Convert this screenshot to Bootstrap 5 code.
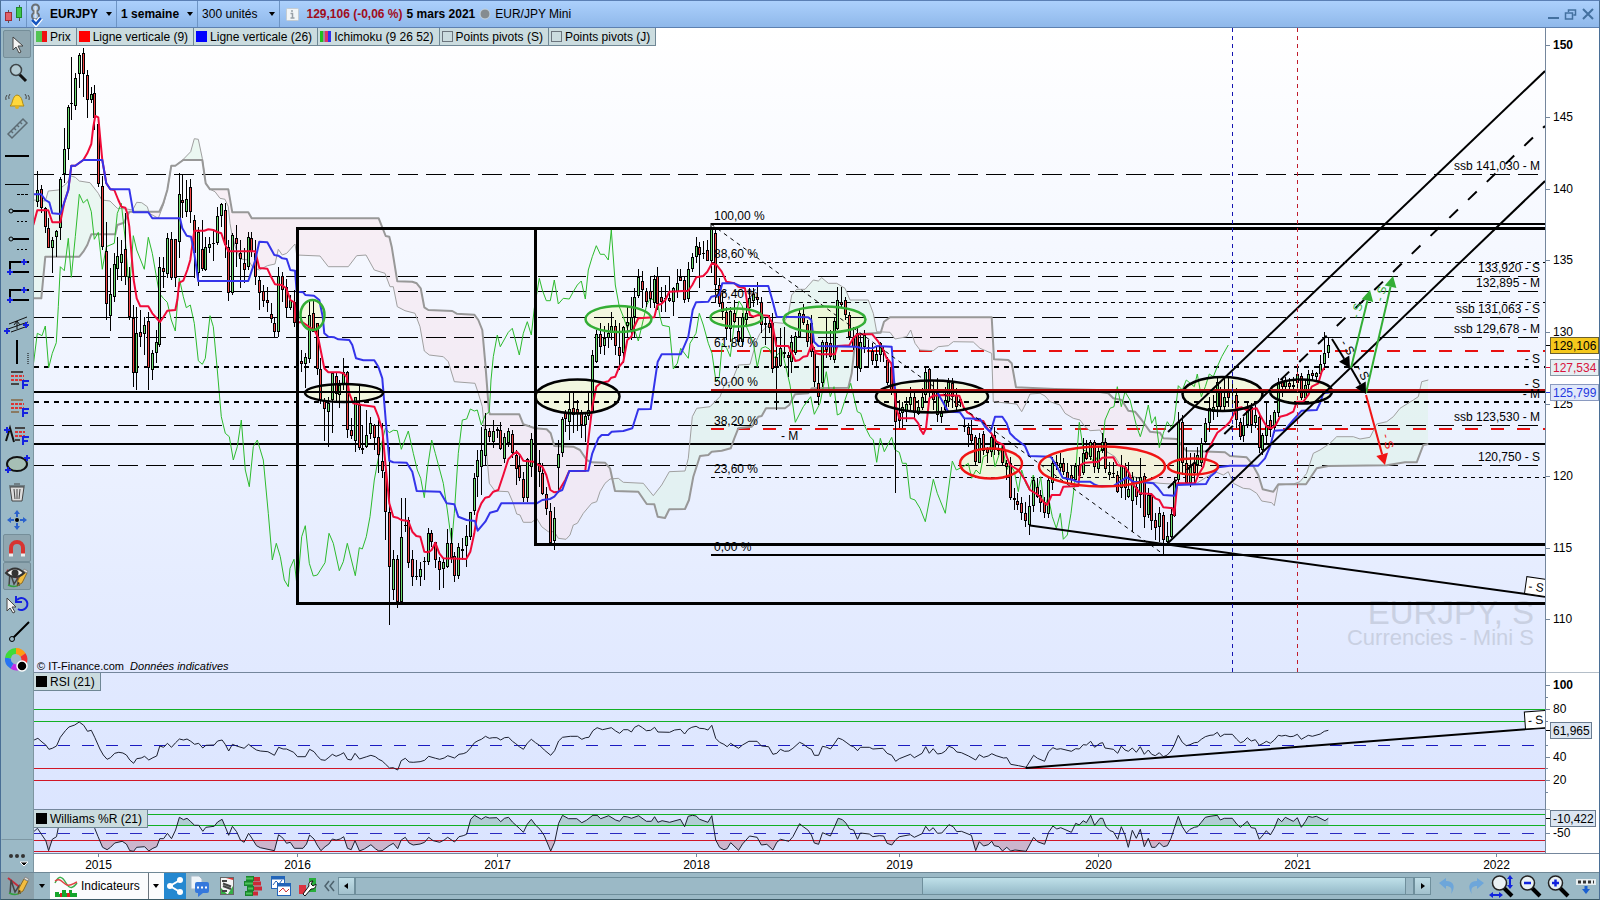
<!DOCTYPE html>
<html lang="fr">
<head>
<meta charset="utf-8">
<meta name="viewport" content="width=device-width, initial-scale=1">
<title>EURJPY - 1 semaine</title>
<link href="https://cdn.jsdelivr.net/npm/bootstrap@5.3.0/dist/css/bootstrap.min.css" rel="stylesheet">
<style>
body{font-family:"Liberation Sans",Arial,sans-serif;font-size:12px;line-height:16px;color:#000;background:#9bb9c6}
button{font:inherit;color:#000;background:none;border:0;padding:0}
.frame{height:100vh;border:1px solid #4a6f96;border-top-color:#5b7fb4;border-bottom-color:#3c5a66}
.titlebar{height:27px;background:linear-gradient(#acd0fc,#8fb8ea);border-bottom:1px solid #5d80b0}
.titlebar .cell{height:26px;border-right:1px solid #6d94c4}
.caret{width:0;height:0;border:3px solid transparent;border-top:4px solid #000;border-bottom:0}
.price{color:#a00d1c}
.tools{width:33px;padding-top:2px;background:#9bb9c6;border-right:1px solid #7d95a0}
.tools button{height:28px;width:28px;margin-left:2px;border:1px solid transparent}
.tools button.on{background:#8fa6b0;border-color:#758e99;border-radius:2px}
.tools .more{height:33px;width:32px;margin:0;border-top:1px solid #7d97a3}
.tools svg,.bottombar svg,.titlebar svg{display:block}
.plot{background:linear-gradient(#fff,#eef3ff 45%,#e1e9ff 78%,#dae4ff)}
.plot svg,.scale svg,.years svg{position:absolute;left:0;top:0;width:100%;height:100%}
.scale{width:54px;background:#fff;border-left:1px solid #74869c}
.years{height:19px;background:#fff;border-top:1px solid #74869c}
.tag{height:18px;line-height:18px;background:#cbdcdf;border:1px solid #6f8795;border-top:0;border-left:0;padding:0 5px 0 2px;white-space:nowrap}
.tags{position:absolute;left:0;z-index:2}
.sw{width:11px;height:11px;display:inline-block;margin-right:3px;vertical-align:-1px}
.bottombar{height:27px;background:#9bb9c6;border-top:1px solid #6f8896}
.bottombar button{height:26px}
.white{background:#fbfcfd}
.track{height:18px;border:1px solid #6f8f9c;background:#9bb9c6}
.thumb{background:linear-gradient(#bfe0e9,#95b9c8);border:1px solid #6f8f9c;border-width:0 1px}
.arrowbtn{width:17px;height:18px!important;background:linear-gradient(#bfdde6,#a2c1cd);border:1px solid #6f8f9c}
.note{position:absolute;left:3px;z-index:2;font-size:11px}
text{font-family:"Liberation Sans",Arial,sans-serif;font-size:12px}
</style>
</head>
<body>
<div class="frame d-flex flex-column overflow-hidden">
  <header class="titlebar d-flex align-items-center flex-shrink-0">
    <div class="cell d-flex align-items-center justify-content-center" style="width:26px">
      <svg width="22" height="22"><path d="M5.500 7v13M16.500 2v16" stroke="#555"/><rect x="2.500" y="9.500" width="6" height="8" fill="#e2606a" stroke="#a02d38"/><rect x="13.500" y="4.500" width="5" height="10" fill="#3fc54a" stroke="#1f8a2c"/></svg>
    </div>
    <div class="cell d-flex align-items-center pe-1">
      <svg width="23" height="25"><g fill="none" stroke="#6a7075" stroke-width="2"><circle cx="8.500" cy="6" r="3.500"/><circle cx="8.500" cy="14" r="3.500"/></g><path d="M8.500 4v12" stroke="#dde3e6" stroke-width="2"/><path d="M6 18l3 4 5-6" fill="none" stroke="#fff" stroke-width="5"/><path d="M5 18l4 4 5-6" fill="none" stroke="#1554c0" stroke-width="2.500"/></svg>
      <button class="d-flex align-items-center fw-bold gap-2">EURJPY <span class="caret"></span></button>
    </div>
    <button class="cell d-flex align-items-center fw-bold gap-2 ps-1 pe-1">1 semaine <span class="caret"></span></button>
    <button class="cell d-flex align-items-center gap-2 ps-1 pe-1">300 unités <span class="caret ms-1"></span></button>
    <svg width="26" height="24"><rect x="6.500" y="6.500" width="12" height="12" rx="1" fill="#f2f5f7" stroke="#c4ccd2"/><path d="M11 9h2M10.500 11.500h2v4M10.500 16h4" stroke="#98a0a6" stroke-width="1.500" fill="none"/></svg>
    <span class="price fw-bold">129,106 (-0,06 %)</span>
    <span class="fw-bold ms-1">5 mars 2021</span>
    <svg width="20" height="20"><circle cx="10" cy="10" r="5" fill="#858c90" stroke="#c5d3dd"/></svg>
    <span>EUR/JPY Mini</span>
    <div class="ms-auto d-flex pe-1 gap-1">
      <button aria-label="Réduire"><svg width="13" height="14" stroke="#43709f" stroke-width="2" fill="none"><path d="M1 11h11"/></svg></button>
      <button aria-label="Restaurer"><svg width="13" height="14" stroke="#43709f" stroke-width="1.500" fill="none"><path d="M4.500 5V3h7v5h-2M1.500 6h7v6h-7z"/></svg></button>
      <button aria-label="Fermer"><svg width="14" height="14" stroke="#43709f" stroke-width="2" fill="none"><path d="M2 2l10 10M12 2L2 12"/></svg></button>
    </div>
  </header>

  <div class="d-flex flex-grow-1 overflow-hidden">
    <nav class="tools d-flex flex-column flex-shrink-0 overflow-hidden" id="tools" aria-label="Outils"></nav>
    <main class="d-flex flex-column flex-grow-1">
      <div class="d-flex flex-grow-1">
        <section class="plot position-relative flex-grow-1 overflow-hidden" id="plot">
          <svg id="chart" role="img" aria-label="Graphique EURJPY"></svg>
          <div class="tags d-flex" style="top:0">
            <span class="tag"><i class="sw" style="background:linear-gradient(90deg,#52c452 50%,#f01010 50%)"></i>Prix</span>
            <span class="tag"><i class="sw" style="background:#f00"></i>Ligne verticale (9)</span>
            <span class="tag"><i class="sw" style="background:#00f"></i>Ligne verticale (26)</span>
            <span class="tag"><i class="sw" style="background:linear-gradient(90deg,#1fc01f 30%,#9a8f9a 30% 45%,#e0306c 45% 70%,#3030f0 70%)"></i>Ichimoku (9 26 52)</span>
            <span class="tag"><i class="sw border border-secondary"></i>Points pivots (S)</span>
            <span class="tag"><i class="sw border border-secondary"></i>Points pivots (J)</span>
          </div>
          <div class="note" id="copy">© IT-Finance.com&nbsp; <em>Données indicatives</em></div>
          <div class="tags" id="rsiTag"><span class="tag d-block"><i class="sw bg-black"></i>RSI (21)</span></div>
          <div class="tags" id="wilTag"><span class="tag d-block"><i class="sw bg-black"></i>Williams %R (21)</span></div>
        </section>
        <aside class="scale position-relative flex-shrink-0"><svg id="scale"></svg></aside>
      </div>
      <div class="years position-relative flex-shrink-0"><svg id="years"></svg></div>
    </main>
  </div>

  <footer class="bottombar d-flex align-items-center flex-shrink-0">
    <button style="width:33px;background:#8ba1ab" aria-label="Dessin"><svg width="33" height="26"><use href="#pencil"/></svg></button>
    <button style="width:16px" aria-label="Plus d'outils"><span class="caret d-block mx-auto"></span></button>
    <button class="white d-flex align-items-center ps-1 pe-2"><svg width="27" height="24" fill="none"><path d="M1 9c4-8 7-7 11 0s7 5 11 0" stroke="#3cae4c" stroke-width="1.500"/><path d="M1 7c6-4 8 3 12 4s7-2 10-3" stroke="#e04444" stroke-width="1.500"/><path d="M1 23v-5h4v2h3v-4h4v3h3v-3h3v3h5v4z" fill="#16a52c"/><path d="M6 23v-4h2v4M13 23v-4h3v4" fill="#d22"/></svg>Indicateurs</button>
    <button class="white border-start border-secondary" style="width:16px" aria-label="Choisir un indicateur"><span class="caret d-block mx-auto"></span></button>
    <button style="width:22px;background:#2488d0" aria-label="Partager"><svg width="22" height="24"><path d="M16 6L6 12l10 6" fill="none" stroke="#fff" stroke-width="2"/><g fill="#fff"><circle cx="16" cy="6" r="3"/><circle cx="6" cy="12" r="3"/><circle cx="16" cy="18" r="3"/></g></svg></button>
    <button aria-label="Discussion"><svg width="28" height="24"><path d="M5 2h8l3 3v10H5z" fill="#eef4f8" stroke="#a8bac8"/><rect x="9" y="8" width="14" height="11" rx="2" fill="#3578dc"/><path d="M12 18v5l5-4" fill="#3578dc"/><path d="M11 13.500h2m2 0h2m2 0h2" stroke="#fff" stroke-width="2"/></svg></button>
    <button aria-label="Ordres"><svg width="27" height="24"><rect x="6.500" y="3.500" width="13" height="17" fill="#f4f4f4" stroke="#666"/><path d="M12 4h7v2z" fill="#e03535"/><path d="M7 20v-6l6 6zM19 20v-8l-5 8z" fill="#35ad44"/><path d="M8 7h5M9 9.500l8 3M9 12l8 3M8 17h5" stroke="#444" stroke-width="2"/></svg></button>
    <button aria-label="Carnet"><svg width="27" height="24"><path d="M5 4.500h8M3 9.500h9M6 14.500h7M4 19.500h8" stroke="#18852b" stroke-width="5"/><path d="M13 5h6M12 9.500h8M13 14.500h8M12 19.500h5" stroke="#cc2a36" stroke-width="4"/><path d="M5 4.500h7M4 9.500h8M7 14.500h5M5 19.500h6" stroke="#4ec35b" stroke-width="2"/></svg></button>
    <button aria-label="Fenêtres"><svg width="27" height="24"><g fill="#fff" stroke="#2365b8"><rect x="3.500" y="2.500" width="13" height="12"/><path d="M3 4h14" stroke-width="3"/><path d="M5 11l3-4 3 3 3-4" fill="none"/><rect x="9.500" y="9.500" width="13" height="12"/><path d="M9 11h14" stroke-width="3"/></g><path d="M11 18l4-4 3 4 3-3" fill="none" stroke="#c33"/></svg></button>
    <button aria-label="Réglages"><svg width="26" height="24"><rect x="4" y="11" width="7" height="9" fill="#dc3340"/><rect x="14" y="4" width="7" height="14" fill="#28ae3b"/><path d="M8 20l6-8c-1-3 1-5 4-5l-2 3 2 2 3-2c0 4-2 5-5 5l-6 7z" fill="#fff" stroke="#111"/></svg></button>
    <button aria-label="Replier"><svg width="17" height="24"><path d="M8 7l-4 5 4 5M13 7l-4 5 4 5" fill="none" stroke="#4d626d" stroke-width="1.500"/></svg></button>
    <div class="d-flex flex-grow-1">
      <button class="arrowbtn" aria-label="Défiler à gauche"><svg class="mx-auto" width="4" height="6"><path d="M4 0v6L0 3z"/></svg></button>
      <div class="track d-flex flex-grow-1"><div class="thumb" style="margin-left:53.600%;width:45.700%"></div></div>
      <button class="arrowbtn" aria-label="Défiler à droite"><svg class="mx-auto" width="4" height="6"><path d="M0 0v6l4-3z"/></svg></button>
    </div>
    <button class="ms-1" aria-label="Annuler"><svg width="26" height="24"><path d="M4 9l7-5v3c8 0 10 6 5 13 2-6-1-8-5-8v3z" fill="#6da6da"/></svg></button>
    <button aria-label="Rétablir"><svg width="28" height="24"><path d="M23 9l-7-5v3c-8 0-10 6-5 13-2-6 1-8 5-8v3z" fill="#6da6da"/></svg></button>
    <button aria-label="Zoom auto"><svg width="28" height="24"><use href="#lens"/><path d="M21 4v9M3 21h9" stroke="#12d" stroke-width="2"/><path d="M21 1l3 4h-6zM21 15l3-4h-6zM0 21l4-3v6zM14 21l-4-3v6z" fill="#12d"/></svg></button>
    <button aria-label="Zoom arrière"><svg width="28" height="24"><use href="#lens"/><path d="M7 9h7" stroke="#12d" stroke-width="2.500"/></svg></button>
    <button aria-label="Zoom avant"><svg width="28" height="24"><use href="#lens"/><path d="M7 9h7M10.500 5.500v7" stroke="#12d" stroke-width="2.500"/></svg></button>
    <button aria-label="Clavier"><svg width="26" height="24"><rect x="3" y="5" width="20" height="6" fill="#e8eef0"/><path d="M5 8h16" stroke="#333" stroke-width="3" stroke-dasharray="3 2"/><path d="M13 12v4" stroke="#1b5fd0" stroke-width="3"/><path d="M9 15h8l-4 5z" fill="#1b5fd0"/></svg></button>
  </footer>
</div>

<svg width="0" height="0" class="position-absolute">
  <defs>
    <g id="pencil"><path d="M7 5l14 11" stroke="#c22d3a" stroke-width="2"/><path d="M9 21l1-14 4 12 4-6 1 8" fill="none" stroke="#444" stroke-width="1.500"/><path d="M8 20c4 2 8 2 11 0" stroke="#33a040" stroke-width="1.500" fill="none"/><path d="M17 21l1-6 5-9 4 2-5 10z" fill="#f3bd3f" stroke="#8a6a25"/><path d="M17 21l1-4 2 1z" fill="#333"/><path d="M23 6l1-2 4 2-1 2z" fill="#e7e2d8" stroke="#888"/></g>
    <g id="lens"><path d="M14 13l9 9" stroke="#000" stroke-width="4"/><circle cx="10.500" cy="9" r="7" fill="#e9f1f4" stroke="#222" stroke-width="1.500"/></g>
  </defs>
</svg>

<script>
// Drawing tools of the left bar: [label, icon drawn in a 28 x 26 box, pressed?]
const B='#1522e0';
const plus=(x,y)=>`<path d="M${x-3} ${y}h6M${x} ${y-3}v6" stroke="${B}" stroke-width="2"/>`;
const fib='<path d="M8 5h12M8 17h8" stroke="#444" stroke-width="2"/><path d="M8 9h13M8 13h13" stroke="#d33" stroke-width="2" stroke-dasharray="3 1"/><path d="M20 22v-8h6M20 18h5" fill="none" stroke="#1522e0" stroke-width="2"/>';
const tools=[
['Sélection','<path d="M10 6v13l3-3 3 6 2-1-3-6h5z" fill="#f4f4f4" stroke="#444"/>',1],
['Loupe','<path d="M16 15l7 7" stroke="#111" stroke-width="3"/><circle cx="13" cy="11" r="5.500" fill="#b4cbd3" stroke="#3f4649" stroke-width="1.500"/>'],
['Alerte','<path d="M7 19c3-2 2-10 7-11 6 1 5 9 7 11z" fill="#ffd83d" stroke="#b08a12"/><circle cx="14" cy="20" r="2" fill="#e0b020"/><path d="M7 7q-2 2-1 5M22 7q2 2 1 5M4 8q-2 2-1 5M25 8q2 2 1 5" fill="none" stroke="#444"/>'],
['Règle','<path d="M5 19L20 4l4 4L9 23zM8 16l2 2m1-5l2 2m1-5l2 2m1-5l2 2" fill="none" stroke="#5c6b73" stroke-width="1.500"/>'],
['Ligne épaisse','<path d="M2 13h24" stroke="#000" stroke-width="2"/>'],
['Ligne','<path d="M2 13.500h24" stroke="#000"/><path d="M14 23.500h12" stroke="#000" stroke-dasharray="3 1"/>'],
['Demi-droite','<circle cx="8" cy="12" r="2" fill="none" stroke="#000"/><path d="M10 12h16" stroke="#000" stroke-width="2"/><path d="M14 22.500h12" stroke="#000" stroke-dasharray="2 2"/>'],
['Demi-droite pointillée','<circle cx="8" cy="12" r="2" fill="none" stroke="#000"/><path d="M10 12h16" stroke="#000" stroke-width="2"/><path d="M14 22.500h12" stroke="#000" stroke-dasharray="2 2"/>'],
['Rectangle','<path d="M26 7H7v10h19" fill="none" stroke="#000" stroke-width="2"/>'+plus(21,7)+plus(7,17)],
['Rectangle ouvert','<path d="M26 7H7v10h19" fill="none" stroke="#000" stroke-width="2"/>'+plus(21,7)+plus(7,17)],
['Canal','<path d="M6 13l18-7M5 18l20-7M8 21l17-6M14 18v-8m-3 4l3-4 3 4" fill="none" stroke="#111"/>'+plus(4,20)+plus(23,14)],
['Ligne verticale','<path d="M14 1v24" stroke="#000" stroke-width="2"/><path d="M25 14v11" stroke="#000" stroke-dasharray="1 1"/>'],
['Fibonacci',fib],
['Fibonacci étendu',fib.replace('M8 5h12','M8 5h12').replace('#444','#8a7a62')],
['Fibonacci projection','<path d="M3 18l4-13 4 14" fill="none" stroke="#111" stroke-width="2"/>'+plus(4,7)+fib.replace('M8 5h12M8 17h8','M12 5h10M12 17h5').replace('M8 9h13M8 13h13','M12 9h10M12 13h10')],
['Ellipse','<ellipse cx="14" cy="13" rx="10" ry="7" fill="#a6bfb5" stroke="#111" stroke-width="2"/>'+plus(5,19)+plus(24,7)],
['Supprimer','<path d="M7 8h14l-2 14H9z" fill="#ddd" stroke="#444"/><path d="M6 7h16M11 5h6M11 10l1 10m2-10v10m3-10l-1 10" stroke="#444"/>'],
['Déplacer','<circle cx="14" cy="13" r="2"/><path d="M14 5v5m0 6v5M6 13h5m6 0h5" stroke="#2a62cc" stroke-width="2"/><path d="M14 3l3 4h-6zM14 23l3-4h-6zM4 13l4-3v6zM24 13l-4-3v6z" fill="#2a62cc"/>'],
['Aimant','<path d="M8 20v-7a6 6 0 0 1 12 0v7" fill="none" stroke="#d83430" stroke-width="4"/><path d="M6 20h4M18 20h4" stroke="#eee" stroke-width="3"/>',1],
['Afficher','<use href="#pencil" transform="translate(-3 2)"/><path d="M3 10q9-9 18 0-9 8-18 0z" fill="#f6f6f6" stroke="#333" stroke-width="2"/><circle cx="12" cy="10" r="3.500" fill="#333"/>',1],
['Annuler','<path d="M4 7v13l3-3 3 5 2-1-3-5h4z" fill="#f4f4f4" stroke="#444"/><path d="M14 9a6 6 0 1 1 1 9M13 5v6h6" fill="none" stroke="#1522e0" stroke-width="2"/>'],
['Segment','<path d="M10 19L26 3" stroke="#000" stroke-width="2"/><circle cx="9" cy="20" r="2.500" fill="#9bb9c6" stroke="#000"/>'],
['Couleurs','<g fill="none" stroke-width="6"><path d="M13 4a8 8 0 0 1 7 4" stroke="#ff9b12"/><path d="M20 8a8 8 0 0 1 0 9" stroke="#f23030"/><path d="M20 17a8 8 0 0 1-11 2" stroke="#c030e8"/><path d="M9 19a8 8 0 0 1-4-8" stroke="#2874f2"/><path d="M5 11a8 8 0 0 1 8-7" stroke="#3edb38"/></g><circle cx="19" cy="19" r="5" fill="#000" stroke="#fff" stroke-width="1.500"/>']];
document.getElementById('tools').innerHTML=tools.map(t=>`<button class="flex-shrink-0 ${t[2]?'on':''}" aria-label="${t[0]}"><svg width="26" height="26" viewBox="1 0 26 26">${t[1]}</svg></button>`).join('')+
 '<button class="more mt-auto flex-shrink-0" aria-label="Plus"><svg width="32" height="32"><g fill="#333"><circle cx="9" cy="16" r="2"/><circle cx="15" cy="16" r="2"/><circle cx="21" cy="16" r="2"/></g><path d="M18 22h8l-4 4z" stroke="#fff"/></svg></button>';

// Series are stored as blocks: origin x, origin y, units per pixel across, then the points.
// Units per pixel downward are always 3.
function series(...blocks){const out=[];for(const [ox,oy,s,t] of blocks)for(const p of t.trim().split(/\s+/)){const [x,y]=p.split(',').map(Number);out.push([ox+x/s,oy+y/3])}return out}
const P1=[30,40,3],P2=[290,220,3],P3=[690,200,3],P4=[1100,220,3];

const tenkan=series([...P1,'10,555 22,511 55,511 67,547 91,547 103,487 115,450 124,377 136,377 160,360 172,340 184,312 190,260 196,228 205,232 212,310 217,360 229,430 241,448 253,450 265,480 274,500 286,503 292,520 298,560 305,650 311,720 320,775 331,799 355,799 367,820 390,846 400,832 412,812 436,810 442,780 448,728 460,722 472,690 481,660 487,615 493,572 523,572 535,568 550,570 562,576 574,580 584,610 595,634 676,634 688,684 712,686 724,712 735,733 755,735 769,745 781,780 793,787 800,847 815,847'],
[...P2,'40,308 75,333 85,355 103,445 115,457 148,457 160,460 170,470 178,520 190,550 215,555 253,560 265,590 277,630 287,740 298,850 310,890 322,893 334,900 355,903 367,935 379,948 391,950 403,995 415,997 425,990 436,968 448,1000 460,1015 529,1017 541,995 553,940 562,880 574,850 586,833 598,830 610,815 625,810 640,765 655,718 667,705 680,695 690,705 700,722 730,725 745,735 757,740 769,765 781,810 793,817 805,815 817,795 826,780 838,753 886,753 895,660 907,560 919,500 931,490 955,484 964,473 976,470 988,440 1000,425 1012,360 1024,350 1033,320 1045,295 1093,292 1102,255 1114,252 1126,240 1138,215 1195,212 1207,195 1219,172 1240,168 1252,155'],
[...P3,'66,190 80,195 95,215 109,245 133,250 145,260 165,265 172,310 180,345 190,350 205,345 235,347 247,370 259,438 295,438 304,455 316,483 328,480 340,470 352,468 365,432 378,460 390,463 435,463 442,438 478,436 490,415 502,403 547,403 565,425 580,450 590,475 604,490 612,560 618,620 628,655 673,655 685,670 692,690 700,702 708,685 718,595 730,587 760,585 808,587 820,620 832,637 845,645 856,660 880,663 892,685 904,700 920,725 940,735 950,770 960,795 985,810 1005,840 1020,870 1045,885 1060,905 1072,915 1085,885 1110,885 1120,860 1165,858 1172,795 1185,788 1225,785'],
[...P4,'7,713 40,712 52,735 75,740 88,760 97,790 105,800 121,820 154,822 166,835 178,840 190,862 218,865 223,885 232,790 285,790 295,765 310,740 320,700 330,680 340,660 352,638 375,620 390,605 400,585 410,565 425,562 440,570 470,565 480,585 500,620 515,625 527,615 540,590 560,585 580,575 590,545 610,545 625,525 635,500 655,490 665,455 673,443']);

const kijun=series([...P1,'10,463 34,463 46,480 58,487 67,520 91,522 103,487 115,450 124,377 136,377 160,360 217,360 229,430 241,448 298,448 310,517 355,517 367,535 450,535 457,565 470,587 483,590 493,640 505,723 655,723 665,692 676,660 688,605 712,607 733,645 745,647 757,655 770,657 781,690 795,692'],
[...P2,'20,215 40,217 46,225 72,227 88,240 98,290 103,340 115,350 133,352 145,358 178,360 187,375 198,415 220,421 253,421 265,440 277,475 287,600 298,722 310,727 350,728 367,755 380,813 450,815 470,850 493,853 505,890 530,900 555,903 563,932 586,905 600,878 622,872 634,850 740,850 757,840 780,837 793,830 805,815 817,810 838,753 895,752 907,700 925,655 935,645 955,645 965,635 1000,633 1027,625 1045,568 1082,567 1092,500 1103,425 1115,403 1172,403 1195,350'],
[...P3,'8,330 18,307 55,305 64,290 88,285 97,250 133,250 150,258 235,258 247,300 260,350 355,352 364,360 372,425 385,438 500,440 515,445 550,444 560,438 605,440 612,540 616,572 740,574 755,600 775,635 810,637 823,655 870,657 885,680 900,695 905,685 915,650 937,650 950,670 960,700 975,715 1005,738 1018,768 1082,770 1095,790 1118,833 1150,840 1160,845 1200,845 1213,853'],
[...P4,'-5,798 40,798 80,772 100,785 130,787 160,790 175,805 190,825 223,827 232,795 318,792 330,770 345,758 355,742 390,737 475,737 495,715 510,680 523,632 555,630 580,600 605,572 650,570 660,550 670,520 690,517']);

const spanB=series([...P1,'10,775 34,775 46,650 148,650 160,635 172,615 184,583 256,583 262,555 282,548 298,515 388,515 400,490 412,450 424,377 436,377 460,360 517,360 527,430 540,448 595,448 607,517 655,517 665,535 1046,535 1067,588 1078,590 1085,620'],
[...P2,'322,184 367,185 380,190 392,205 403,262 415,270 487,273 500,281 553,284 565,300 577,330 586,430 597,575 600,583 688,583 700,613 735,625 770,628 782,640 793,678 850,680 870,690 890,720 905,727 945,728 960,745 975,813 1045,815 1070,852 1093,853 1103,890 1125,894 1138,868 1185,867 1197,840'],
[...P3,'10,830 30,768 55,765 65,755 95,752 122,745 133,715 145,685 185,680 205,650 215,648 228,625 285,625 298,615 315,583 355,580 365,565 475,563 485,520 495,430 502,403 572,398 582,365 600,352 905,352 912,478 955,480 965,490 978,562 1095,567 1220,570'],
[...P4,'0,516 25,520 40,535 65,540 85,572 105,575 125,600 150,635 180,638 190,655 230,657 258,692 375,697 390,708 440,712 455,730 475,765 488,808 520,815 535,793 618,793 650,745 685,738 860,736 915,727 950,727 970,675 985,672']);

const spanA=series([...P1,'10,480 46,483 55,453 85,450 110,430 124,408 136,412 148,423 180,428 205,460 215,480 240,483 262,505 290,507 308,510 320,487 335,488 352,500 358,520 385,535 400,495 412,450 424,377 436,377 460,358 482,335 493,296 505,298 517,355 527,430 540,448 555,455 570,475 585,478 595,500 600,550 607,590 619,630 631,657 655,660 668,682 688,690 712,677 735,672 745,628 757,645 770,640 795,612 800,645 870,648 895,680 955,680 980,647 1008,645 1033,690 1065,700 1080,740 1090,740 1102,800 1125,812 1155,820 1170,860'],
[...P2,'403,393 418,405 460,410 475,425 493,485 555,490 565,520 577,560 588,680 598,790 615,813 655,815 670,850 680,882 690,885 700,907 725,907 740,895 755,920 775,935 793,935 805,955 828,958 840,945 850,915 862,910 880,880 905,850 920,845 930,815 945,790 960,777 985,775 1000,787 1060,790 1090,827 1115,795 1138,755 1185,753 1195,715'],
[...P3,'7,650 20,625 60,620 90,590 105,550 125,545 145,495 180,493 200,420 210,400 230,380 250,367 280,370 295,345 305,285 320,268 345,268 370,240 385,243 395,233 415,250 440,250 465,265 480,300 535,300 550,340 560,395 600,397 615,417 650,410 662,390 675,430 690,450 730,452 745,440 775,437 790,425 850,426 870,445 905,460 910,605 980,612 995,635 1008,610 1020,582 1050,580 1065,588 1080,605 1110,615 1125,640 1150,655 1170,660 1185,680 1200,692 1230,690'],
[...P4,'10,650 20,695 45,710 60,735 90,765 140,785 180,790 232,793 290,790 345,755 370,765 385,755 400,790 430,805 450,807 470,820 485,843 515,848 523,857 535,795 580,792 600,785 620,760 640,700 660,690 690,670 710,650 760,650 780,657 810,652 830,612 860,605 880,590 900,565 940,540 955,530 965,485 985,480']);

const chikou=series([...P1,'10,975 22,880 36,887 46,858 56,983 67,940 79,908 85,800 91,680 103,692 115,595 124,712 136,590 148,463 160,489 172,478 184,515 193,598 205,577 217,688 229,620 253,610 262,520 274,490 286,600 298,760 310,587 320,630 343,688 355,592 367,640 388,760 400,775 412,787 424,840 436,873 448,715 460,770 469,803 481,795 493,850 505,962 517,973 526,955 540,827 550,860 562,990 574,1130 586,1180 598,1190 610,1260 622,1220 634,1140 646,1290 658,1340 670,1220 682,1200 700,1260 715,1420 727,1560 739,1510 751,1550 763,1620 775,1640'],
[...P2,'0,1045 12,1018 22,1105 35,950 46,917 58,1030 70,1068 82,1065 105,1028 117,940 130,970 148,1052 160,1025 172,970 196,1067 208,983 217,987 229,950 240,890 253,780 265,715 280,650 286,625 298,638 310,631 322,632 334,688 355,633 370,700 382,750 392,775 403,833 413,740 425,660 436,700 460,790 472,870 485,968 493,880 505,700 517,600 530,597 541,567 553,573 562,570 574,615 586,585 598,575 603,480 610,410 622,345 631,380 655,337 667,325 688,405 700,340 712,305 724,345 733,265 748,175 757,210 769,242 781,242 793,180 805,252 820,235 838,237 850,215 862,195 874,183 886,237 895,150 907,110 919,77 931,103 943,103 955,120 964,30 976,195 988,260 1000,290 1012,325 1024,300 1045,363 1055,320 1070,255 1080,237 1102,240 1110,290 1117,316 1138,320 1150,447 1162,430 1172,385 1195,415'],
[...P3,'0,430 18,400 28,340 40,375 55,430 66,460 78,545 88,530 97,430 110,445 121,470 133,370 147,303 157,318 165,370 178,400 190,430 202,500 214,445 226,440 238,447 250,475 262,465 275,450 285,490 300,555 316,667 340,620 362,590 373,643 390,610 409,515 421,590 432,560 442,645 452,640 465,600 482,550 502,635 512,640 525,680 540,710 550,720 560,787 571,715 583,755 605,712 615,750 628,757 637,790 649,790 661,895 675,900 690,925 706,965 730,838 742,880 766,940 787,783 799,810 820,800 835,790 845,835 858,810 870,822 880,770 892,765 904,728 915,800 937,735 950,810 960,790 973,815 985,875 995,810 1007,850 1018,870 1030,825 1042,880 1052,830 1063,925 1075,890 1087,950 1099,985 1111,940 1120,1018 1132,1005 1143,940 1155,840 1168,667 1180,750 1192,755 1213,790 1237,740'],
[...P4,'15,600 30,565 42,560 52,500 64,560 75,515 90,540 110,620 121,650 133,610 145,555 155,610 166,590 178,683 190,640 202,605 215,625 223,600 235,497 247,510 259,480 271,490 283,500 292,462 304,530 316,500 328,462 340,470 352,440 365,410 385,375']);

const rsi=series([0,640,2.904,'99,300 110,295 122,306 133,315 142,328 152,325 164,318 175,292 190,272 200,261 217,255 230,246 243,256 254,274 265,271 275,292 290,327 300,345 311,358 321,353 333,340 345,337 357,339 367,345 377,360 388,370 397,356 410,354 420,349 432,360 444,353 455,348 464,318 475,322 486,310 498,322 510,308 521,297 533,300 543,297 554,304 565,313 577,310 589,324 598,316 622,315 632,303 645,300 654,313 664,333 675,313 687,318 709,325 722,313 733,322 745,330 756,333 778,335 797,346 809,322 822,327 832,327 853,337 864,350 887,350 899,328 912,335 921,347 932,359 944,361 955,352 965,343 976,349 988,344 998,338 1009,358 1020,360 1031,340 1044,357 1065,350 1077,346 1090,350 1100,358 1110,363 1120,373 1131,384 1142,383 1155,390 1165,362 1177,355 1188,366 1200,367 1220,365 1233,361 1245,349 1265,355 1277,358 1290,354 1300,347 1320,354 1333,343 1345,341 1355,337 1367,323 1378,308 1388,302 1398,298 1410,289 1421,295 1431,293 1443,293 1454,300 1465,293 1477,292 1488,304 1498,311 1508,320 1520,328 1531,310 1543,298 1555,308'],
[540,680,2.8,'0,197 12,210 30,226 41,212 52,183 63,172 85,169 105,169 117,178 128,173 137,172 148,152 160,143 175,149 200,143 212,153 223,160 234,149 246,149 256,156 265,142 276,136 287,143 298,152 310,151 321,142 330,156 363,157 377,150 393,148 405,162 415,148 425,142 437,139 447,145 460,146 470,150 481,136 492,175 503,187 515,193 524,200 534,190 545,198 556,205 567,195 585,184 608,184 620,198 640,200 652,223 663,220 673,208 685,214 697,213 708,205 727,187 737,192 750,203 760,208 768,226 780,226 791,199 803,202 813,207 825,190 835,174 847,179 857,187 870,197 878,200 889,212 897,202 922,202 932,207 960,205 972,220 985,226 996,244 1006,236 1037,223 1048,233 1070,220 1080,200 1090,220 1101,206 1113,222 1125,220 1135,213 1145,199 1157,204 1167,216 1180,218 1200,228 1220,240 1230,224 1242,232 1255,228 1265,221 1277,227 1298,234 1307,233 1318,253 1340,257 1361,262 1382,226 1393,235 1413,244 1424,215 1436,203 1447,208 1458,206 1488,214 1500,206 1510,207 1521,194 1530,195 1542,184 1553,202'],
[1100,660,3,'0,250 8,248 15,264 40,268 53,280 64,258 75,270 85,274 97,264 109,277 121,260 133,283 145,270 155,283 166,287 178,278 190,290 202,285 213,273 223,255 235,226 247,247 259,257 270,254 283,248 293,247 304,238 316,230 330,226 340,225 352,217 361,230 373,223 397,223 410,238 421,248 430,245 442,233 454,243 466,239 478,256 490,250 499,244 511,250 523,240 535,226 545,228 556,226 570,230 580,229 592,223 604,238 616,231 625,226 637,229 661,222 673,214 685,211']);

const will=series([0,640,2.904,'99,574 109,565 121,584 133,602 141,632 152,598 164,590 170,560 180,530 240,528 275,565 285,590 298,622 311,629 321,622 333,609 355,604 367,612 377,632 388,634 397,622 420,620 432,633 444,625 455,620 464,596 475,596 486,580 498,596 510,570 521,532 533,539 543,535 554,545 565,556 577,556 589,574 598,562 622,559 632,546 645,538 654,560 664,586 675,559 687,575 698,600 709,607 722,580 733,597 745,617 756,623 797,632 809,584 822,595 832,610 843,607 855,625 880,625 890,612 899,585 912,597 921,615 932,632 944,620 955,612 965,597 976,600 988,597 998,590 1009,625 1020,629 1031,602 1044,633 1058,627 1077,614 1090,626 1100,633 1110,632 1130,617 1142,610 1155,626 1165,600 1177,592 1188,609 1200,615 1220,612 1233,607 1245,592 1258,602 1277,607 1290,600 1300,592 1320,606 1333,590 1345,587 1355,583 1367,538 1378,526 1398,538 1410,530 1421,534 1443,533 1454,545 1465,535 1477,532 1488,546 1508,565 1520,577 1531,553 1543,538 1555,555'],
[540,680,2.8,'0,448 12,467 30,513 41,487 52,430 63,406 80,416 103,416 117,428 130,421 148,406 160,406 170,416 192,407 212,420 223,424 234,409 246,411 256,415 276,407 298,424 312,424 321,410 330,427 342,422 363,427 393,418 405,440 415,409 427,406 437,408 447,418 470,427 481,407 492,480 503,502 515,509 524,506 534,488 556,511 567,492 587,468 608,472 620,495 635,493 652,510 663,487 673,478 697,484 708,470 727,431 737,440 750,450 760,465 768,489 780,493 791,458 813,468 825,440 835,415 847,419 857,430 867,447 878,450 889,478 897,459 922,462 932,470 950,467 962,468 972,490 985,495 996,479 1006,470 1037,464 1048,472 1070,461 1080,439 1090,453 1101,443 1113,460 1125,459 1145,434 1157,440 1167,455 1180,454 1208,466 1220,512 1230,485 1242,498 1255,494 1265,484 1272,497 1285,500 1295,513 1307,502 1318,513 1330,510 1361,514 1382,472 1393,485 1413,493 1424,457 1436,438 1447,447 1458,443 1488,457 1500,430 1510,435 1521,422 1530,428 1542,406 1553,436'],
[1100,660,3,'0,475 8,475 18,500 30,512 40,515 53,538 64,500 75,525 85,562 97,511 109,535 121,508 133,560 145,535 155,562 166,562 178,548 190,560 202,557 213,535 223,505 235,469 247,500 259,519 270,508 283,502 293,500 304,487 316,472 330,469 352,466 361,480 373,475 397,475 410,492 421,502 442,484 454,503 466,505 478,538 490,524 499,512 511,525 523,505 535,475 545,485 556,472 580,484 592,473 604,502 616,485 625,469 637,472 649,469 675,482 685,475']);

// Candles: x, high, low, body top, body bottom, direction (g up, r down)
const bars=[[30,40,`22 393 500 451 487 g,34 435 520 448 505 r,46 500 580 505 560 r,55 535 625 565 625 r,67 590 700 600 625 g,79 570 650 572 590 g,91 410 600 417 563 g,103 263 430 328 403 g,115 195 360 202 328 g,124 50 240 188 190 g,136 100 210 114 197 g,148 38 145 45 103 g,160 25 170 40 103 r,172 90 233 106 181 r,184 140 190 162 181 g,193 135 270 160 235 r,205 250 440 252 433 r,217 408 630 437 622 r,229 545 840 632 793 r,241 685 872 762 827 g,253 640 785 672 772 g,262 590 720 648 686 g,274 600 722 642 668 g,286 520 735 627 710 r,298 680 840 710 832 r,310 795 1040 835 1000 r,319 800 1050 878 1000 g,331 810 920 876 890 r,343 832 945 855 883 g,355 815 1050 842 985 r,367 930 1020 940 990 g,379 870 970 905 940 g,388 650 920 680 915 g,400 650 745 685 695 r,412 580 715 595 703 g,424 575 720 598 713 r,436 597 740 598 715 r,448 400 655 463 607 g,457 402 535 480 490 r,469 420 530 478 517 g,481 417 550 442 517 r,493 525 715 540 640 r,505 560 737 577 700 g,517 540 692 628 688 r,526 590 692 622 690 g,538 590 640 612 625 g,550 570 662 608 612 r,562 500 615 528 610 g,574 490 560 491 528 g,586 490 655 510 615 r,595 600 782 620 760 r,607 580 765 586 760 g,619 556 680 595 612 r,631 600 745 640 657 r,643 625 730 670 690 r,655 577 690 592 680 g,664 577 650 595 635 r,676 600 735 640 712 r,688 712 810 720 760 r,700 735 800 752 782 r,712 740 815 780 788 r,724 790 850 822 838 r,733 835 890 850 875 r,745 680 890 708 875 g,757 695 785 708 750 r,769 718 830 740 805 r,781 765 810 780 805 g,793 750 860 785 850 r`],
[290,220,`34 390 455 424 432 r,46 400 505 412 432 g,58 240 430 285 418 g,70 240 330 280 335 r,82 310 465 310 447 r,91 415 552 447 540 r,103 535 663 540 568 r,115 530 680 548 577 g,127 455 638 458 540 g,139 455 545 468 522 r,148 480 565 495 525 g,160 415 510 457 492 g,172 452 655 457 630 r,184 595 657 630 648 r,196 530 697 532 663 g,208 495 690 555 685 r,217 615 703 683 690 r,229 570 685 645 682 g,241 590 657 610 642 g,253 612 690 614 655 r,265 600 760 650 705 r,277 610 775 722 752 r,286 740 960 755 877 r,298 680 1215 875 1042 r,310 990 1140 1018 1110 g,322 1005 1165 1018 1147 r,334 833 1150 952 1147 g,346 833 935 915 918 r,355 890 1045 900 1028 r,367 990 1098 1018 1070 r,379 1020 1080 1067 1070 r,391 1025 1098 1047 1070 g,403 1010 1080 1024 1027 r,415 925 1035 940 1025 g,424 930 980 940 965 r,436 965 1045 967 1020 r,448 1010 1110 1022 1050 r,460 1015 1103 1025 1047 g,472 928 1045 970 1042 g,484 925 1030 968 1015 r,493 995 1087 1008 1067 r,505 970 1078 982 1067 g,517 955 1020 988 992 r,529 915 1040 948 978 g,541 875 960 877 952 g,553 760 885 775 872 g,562 690 830 720 770 g,574 620 825 690 740 g,586 578 735 628 707 g,598 625 665 634 652 r,610 600 685 632 665 g,622 620 655 628 632 r,631 605 690 630 688 r,643 640 730 652 718 g,655 625 680 634 668 g,667 630 715 642 698 r,679 690 795 706 748 r,688 705 782 738 775 r,700 755 845 778 835 r,712 715 845 717 833 g,724 640 770 657 740 g,748 690 800 728 757 r,757 730 825 760 822 r,769 800 885 822 868 r,781 850 975 873 968 r,793 860 990 895 962 g,805 660 820 703 745 g,817 590 710 598 700 g,826 570 635 580 597 r,838 515 660 566 607 g,850 515 640 565 585 r,862 540 632 567 580 r,874 570 655 577 615 r,886 580 665 587 615 g,895 520 600 570 587 g,907 390 580 405 575 g,919 330 430 342 425 g,931 310 403 342 380 r,943 318 405 355 378 g,955 310 385 340 355 g,964 275 360 318 340 g,976 300 405 318 377 r,988 310 450 382 407 r,1000 318 430 322 400 g,1012 262 355 305 318 g,1024 230 360 290 330 g,1033 205 350 230 290 g,1045 147 235 172 228 g,1057 153 263 182 210 r,1069 203 260 213 245 r,1081 170 265 212 238 r,1093 165 265 177 250 g,1102 140 270 167 252 r,1114 200 275 232 245 r,1126 195 275 235 238 r,1138 168 245 235 242 r,1150 200 288 205 245 g,1162 148 235 188 215 g,1171 148 180 170 182 r,1183 170 250 180 240 r,1195 125 245 147 238 g,1207 98 155 112 148 g,1219 52 130 78 112 g,1228 65 205 80 105 r,1240 63 118 98 103 r,1252 60 123 90 122 r,1264 25 158 28 122 g,1276 30 250 38 195 r`],
[690,200,`88 235 320 255 313 r,97 280 360 305 335 r,109 320 420 335 388 r,121 320 425 333 388 g,133 300 370 340 365 r,145 350 435 392 425 r,157 340 440 350 425 g,169 290 375 340 360 g,178 265 330 295 325 g,190 265 320 283 302 g,202 245 315 290 300 r,214 290 400 305 375 r,226 350 435 368 375 r,238 345 400 370 385 r,247 340 520 370 508 r,259 410 630 470 500 r,271 385 500 445 498 g,283 380 475 455 462 r,295 457 530 465 475 r,304 405 520 427 485 g,316 395 465 408 460 g,328 330 415 340 410 g,340 312 375 342 370 r,352 360 440 372 425 r,364 345 470 370 455 r,373 440 560 453 545 r,385 500 615 548 590 r,397 420 560 427 550 g,409 355 475 425 450 r,421 390 480 430 470 r,433 350 490 362 480 g,442 262 390 300 388 g,454 262 320 305 315 r,466 290 360 300 345 r,478 335 420 345 410 r,490 380 450 415 440 r,502 385 543 400 500 r,511 405 515 427 508 g,523 390 460 405 442 g,535 420 505 440 444 r,547 430 495 452 482 r,559 440 500 462 482 g,571 425 485 430 465 g,580 440 485 450 455 r,592 470 555 480 550 r,604 490 585 500 580 r,616 570 880 575 665 r,628 600 685 638 662 r,637 605 685 620 640 g,649 590 665 612 635 g,661 560 630 590 615 g,673 570 655 592 640 r,685 600 645 620 642 g,697 565 630 590 625 g,706 500 605 517 585 g,718 505 600 508 570 r,730 540 630 575 600 r,742 535 665 570 645 g,754 620 670 640 652 g,766 560 640 600 630 g,775 535 620 545 605 g,787 535 625 550 590 r,799 565 640 585 620 r,811 590 620 598 610 r,823 655 695 675 680 r,835 670 740 680 705 r,844 660 735 703 722 r,856 705 795 712 785 r,868 700 790 715 788 g,880 692 765 703 752 r,892 740 790 748 758 r,904 705 770 712 755 g,913 680 765 705 750 r,925 730 765 745 752 r,937 735 795 745 790 r,949 780 840 788 800 r,961 770 900 790 895 r,973 865 930 895 900 r,982 880 930 903 915 r,994 890 960 910 938 r,1006 905 980 940 963 r,1018 885 1005 918 975 g,1030 830 935 840 918 g,1042 835 895 860 890 r,1051 870 935 885 910 r,1063 890 955 905 940 r,1075 835 955 840 943 g,1087 770 870 790 850 g,1099 765 810 785 797 r,1111 760 815 790 805 g,1120 775 825 790 815 r,1132 790 850 815 840 r,1144 795 850 825 840 r,1156 790 845 797 840 g,1168 770 830 795 828 r,1180 715 825 760 820 g,1189 720 780 755 778 r,1201 720 780 725 770 g,1213 720 820 725 800 r,1225 740 820 752 808 g,1237 703 760 735 752 g,1246 725 820 740 808 r,1258 785 830 815 822 r,1270 785 835 818 823 r,1282 812 880 825 875 r`],
[1100,220,`7 640 700 665 690 g,16 655 755 665 748 r,28 740 780 757 765 g,40 740 775 758 762 r,52 752 820 765 815 r,64 705 835 735 805 g,76 728 840 740 803 r,85 725 835 808 832 g,97 755 937 770 843 g,109 770 855 800 830 r,121 715 865 770 825 g,133 760 925 768 890 r,145 805 895 825 885 g,154 820 930 825 903 r,166 880 960 900 925 r,178 860 965 880 922 g,190 875 1003 885 960 r,202 905 975 948 965 g,214 860 955 883 950 g,223 770 890 782 888 g,235 575 790 605 780 g,247 585 765 605 730 r,259 680 795 730 790 r,271 700 800 735 790 g,283 700 790 730 760 r,292 680 765 705 735 g,304 655 740 668 730 g,316 595 670 610 665 g,328 530 635 565 610 g,340 525 600 560 575 g,352 475 590 487 560 g,361 500 570 510 560 r,373 470 575 530 560 g,385 475 560 515 535 r,397 485 560 510 520 r,409 505 625 525 600 r,421 595 660 605 650 r,430 590 665 615 648 g,442 545 625 565 615 g,454 550 640 560 615 r,466 555 625 585 610 g,478 585 700 590 685 r,487 640 705 645 690 g,499 545 670 618 648 g,511 585 650 600 630 r,523 570 640 575 625 g,535 475 590 485 578 g,547 475 530 485 500 r,556 470 520 480 500 g,568 475 510 490 500 r,580 470 510 495 500 r,592 445 510 462 490 g,604 460 540 468 535 r,616 480 540 495 535 g,625 450 520 463 495 g,637 450 480 460 467 r,649 455 480 460 470 g,661 405 470 433 462 g,673 335 450 398 432 g,685 350 415 375 398 g`]];

const G='#34ae36',R='#f01414',K='#000';
const ellipses=[[312.5,315,12,15,G],[344,393,39,9,K],[577.5,396.5,42,17,K],[618.5,319,33,13,G],[736.5,317.5,26,9,G],[824.5,319.5,41,13,G],[932,396.5,56,16,K],[991,463.5,31,15,R],[1102,466.5,63,20,R],[1193,466.5,25,8,R],[1222.5,394,40,17,K],[1301,391.5,31,12,K]];

function draw(){
 const box=document.getElementById('plot'),W=box.clientWidth,H=box.clientHeight;
 // the plots are laid out on a 1511 x 825 field whose corner is at 34,28
 const X=x=>(x-34)*W/1511,Y=y=>(y-28)*H/825;
 let s='';
 const pts=a=>a.map(p=>X(p[0]).toFixed(1)+','+Y(p[1]).toFixed(1)).join(' ');
 const poly=(a,c,w)=>s+=`<polyline points="${pts(a)}" fill="none" stroke="${c}" stroke-width="${w}" stroke-linejoin="round"/>`;
 const line=(x1,y1,x2,y2,c,w,d)=>s+=`<line x1="${X(x1)}" y1="${Y(y1)}" x2="${X(x2)}" y2="${Y(y2)}" stroke="${c}" stroke-width="${w}"${d?` stroke-dasharray="${d}"`:''}/>`;
 const label=(x,y,t,o='')=>s+=`<text x="${X(x)}" y="${Y(y)}" ${o}>${t}</text>`;
 label(1534,624,'EURJPY, S','text-anchor="end" style="font-size:33px" fill="#c9d0e2"');
 label(1534,645,'Currencies - Mini S','text-anchor="end" style="font-size:22px" fill="#c9d0e2"');

 // cloud between the two Senkou spans
 const at=(a,x)=>{for(let i=1;i<a.length;i++)if(x<=a[i][0]){const p=a[i-1],q=a[i];return p[1]+(q[1]-p[1])*(x-p[0])/(q[0]-p[0]||1)}return a[a.length-1][1]};
 let run=[],sign=0;
 const flush=()=>{if(run.length>1)s+=`<polygon points="${pts(run.map(r=>[r[0],r[1]]).concat(run.map(r=>[r[0],r[2]]).reverse()))}" fill="${sign>0?'#d8f4e0':'#f8e0e8'}" fill-opacity=".42"/>`};
 for(let x=34;x<=1428;x++){const a=at(spanA,x),b=at(spanB,x),g=a<=b?1:-1;if(g!==sign){run.push([x,a,b]);flush();run=[];sign=g}run.push([x,a,b])}
 flush();

 const ring=(e,o)=>s+=`<ellipse cx="${X(e[0])}" cy="${Y(e[1])}" rx="${e[2]*W/1511}" ry="${e[3]*H/825}" ${o}/>`;
 for(const e of ellipses)ring(e,'fill="#f4fac0" fill-opacity=".5"');

 for(const y of [174.5,276.5,291.5,317.5,337.5,425.5,465.5])line(34,y,1542,y,K,1,'20 8');
 line(34,367,1545,367,K,2,'5 5');line(34,402,1545,402,K,2,'5 5');
 line(34,444,1545,444,K,2);
 for(const y of [262.5,302.5,477.5])line(711,y,1545,y,K,1,'4 4');
 line(711,351,1545,351,'#e81010',2,'13 13');line(711,429,1545,429,'#e81010',2,'13 13');
 poly(spanA,'#a0a0a0',1);poly(spanB,'#989898',2);poly(chikou,'#2dbb2d',1);
 for(const [ox,oy,t] of bars)for(const b of t.split(',')){const [x,h,l,o,c,d]=b.split(' '),f=v=>Math.round(Y(oy+v/3)),cx=Math.floor(X(ox+x/3)),bt=f(o),bh=Math.max(1,f(c)-bt);
  s+=`<path d="M${cx} ${f(h)}h1v${f(l)-f(h)}h-1zM${cx-1} ${bt}h3v${bh}h-3z"/>`;
  if(bh>2)s+=`<path d="M${cx} ${bt+1}h1v${bh-2}h-1z" fill="${d==='g'?'#6ede70':'#f04444'}"/>`}
 poly(tenkan,'#f00a38',2);poly(kijun,'#3434ea',2);

 s+=`<path d="M${X(1545)} ${Y(228.5)}H${X(297.5)}V${Y(603.5)}H${X(1545)}M${X(535.5)} ${Y(228.5)}V${Y(544.5)}H${X(1545)}" fill="none" stroke="#000" stroke-width="3"/>`;
 line(711,224,1545,224,K,2);line(711,555,1545,555,K,2);line(711,223,711,230,K,1);
 line(711,224,1163,554,K,1,'4 4');
 for(const e of ellipses)ring(e,`fill="none" stroke="${e[4]}" stroke-width="2.500"`);
 line(34,392,1545,392,K,2);line(711,390,1545,390,'#b01010',2);
 for(const [y,t] of [[220,'100,00 %'],[258,'88,60 %'],[298,'76,40 %'],[347,'61,80 %'],[386,'50,00 %'],[425,'38,20 %'],[473,'23,60 %'],[551,'0,00 %']])label(714,y,t);
 label(781,440,'- M');
 for(const [y,t] of [[170,'ssb 141,030 - M'],[271.5,'133,920 - S'],[287,'132,895 - M'],[313,'ssb 131,063 - S'],[333,'ssb 129,678 - M'],[363,'- S'],[388,'- S'],[398,'- M'],[421,'ssb 123,530 - M'],[461,'120,750 - S']])label(1540,y,t,'text-anchor="end"');
 line(1168,432,1545,71,K,2);line(1168,543,1545,181,K,2);line(1168,488,1545,126,K,2,'12 14');
 line(1030,525.5,1545,596.7,K,2);
 line(1232.5,28,1232.5,672,'#1414b0',1,'4 4');line(1297.5,28,1297.5,672,'#c01c2c',1,'4 4');

 const arrow=(x1,y1,x2,y2,c)=>{const a=Math.atan2(y2-y1,x2-x1),bx=x2-11*Math.cos(a),by=y2-11*Math.sin(a),dx=6*Math.sin(a),dy=6*Math.cos(a);line(x1,y1,bx,by,c,2);s+=`<polygon points="${pts([[x2,y2],[bx+dx,by-dy],[bx-dx,by+dy]])}" fill="${c}"/>`};
 arrow(1351,368,1370,290,G);arrow(1366,393,1393,276,G);arrow(1332,339,1350,368,K);arrow(1351,368,1366,394,K);arrow(1366,395,1385,465,R);
 const turned=(x,y,a,t,c)=>s+=`<text transform="translate(${X(x)} ${Y(y)}) rotate(${a})" fill="${c}">${t}</text>`;
 turned(1340,343,58,'- S',K);turned(1355,368,60,'- S',K);turned(1359,319,-76,'- S',G);turned(1383,302,-76,'- S',G);turned(1382,435,75,'- S',R);
 const flag=(x,y,a)=>s+=`<g transform="translate(${X(x)} ${Y(y)}) rotate(${a})"><rect x="0" y="-17" width="26" height="17" fill="#fff" stroke="#000"/><text x="3" y="-4">- S</text></g>`;
 flag(1524.5,593.5,8);

 // RSI
 const rule=(y,c,d)=>line(34,y,1545,y,c,1,d);
 rule(672.5,'#74869c');rule(809.5,'#74869c');
 rule(709.5,'#12b024');rule(721.5,'#12b024');rule(745.5,'#1a1ac0','12 12');rule(768.5,'#d01626');rule(780.5,'#d01626');
 poly(rsi,'#1c2030',1);line(1025.7,768,1545,727.7,K,2);flag(1525.5,729,-4);
 // Williams %R, shaded outside the -20 / -80 levels
 const edge=(y)=>pts([[34,y]].concat(will,[[1328.3,y]]));
 s+=`<clipPath id="up"><rect x="0" y="${Y(809)}" width="${W}" height="${Y(825.5)-Y(809)}"/></clipPath><clipPath id="dn"><rect x="0" y="${Y(840.5)}" width="${W}" height="30"/></clipPath>`;
 s+=`<polygon points="${edge(825.5)}" fill="#5a9a78" fill-opacity=".32" clip-path="url(#up)"/><polygon points="${edge(840.5)}" fill="#a84858" fill-opacity=".3" clip-path="url(#dn)"/>`;
 rule(814.5,'#12b024');rule(825.5,'#12b024');rule(833.5,'#2a2ac0','12 12');rule(840.5,'#d01626');rule(851.5,'#d01626');
 poly(will,'#1c2030',1);
 document.getElementById('chart').innerHTML=s;
 document.getElementById('copy').style.top=Y(672.5)-15+'px';
 document.getElementById('rsiTag').style.top=Y(673)+'px';
 document.getElementById('wilTag').style.top=Y(810)+'px';

 // price, RSI and Williams scales
 s='';
 const tick=(y,w)=>s+=`<path d="M0 ${Y(y)}h${w}" stroke="#74869c"/>`;
 const num=(y,t,b)=>{tick(y,4);s+=`<text x="7" y="${Y(y)+3.500}"${b?' font-weight="bold"':''}>${t}</text>`};
 [150,145,140,135,130,125,120,115,110].forEach((v,i)=>num(Math.round(45+i*71.8)+.5,v,!i));
 s+=`<path d="M0 ${Y(672.5)}h54M0 ${Y(809.5)}h4" stroke="#b4bec8"/>`;
 num(685.5,100,1);num(709.5,80);num(757.5,40);num(780.5,20);num(833.5,'-50');
 [697.5,721.5,745.5,768.5,792.5].forEach(y=>tick(y,2));
 const price=(y,t,f,c,w,k)=>{s+=`<path d="M0 ${Y(y)}h4" stroke="${c}"/><rect x="4.500" y="${Y(y)-8}" width="${w}" height="16" fill="${f}" stroke="${k}"/><text x="7" y="${Y(y)+4.500}" fill="${c}">${t}</text>`};
 price(345.5,'129,106','#f5c81c','#000',48,'#6a6030');price(367.5,'127,534','#e6eef2','#d8143c',48,'#8a9aa6');price(392.5,'125,799','#e0e8fa','#2438e0',48,'#8a9ac0');
 price(730.5,'61,965','#dce6f2','#000',41,'#6a7c90');price(818.5,'-10,422','#dce6f2','#000',45,'#6a7c90');
 document.getElementById('scale').innerHTML=s;

 s='';
 for(const [x,t] of [[98.5,2015],[297.5,2016],[497.5,2017],[696.5,2018],[899.5,2019],[1098.5,2020],[1297.5,2021],[1496.5,2022]])s+=`<path d="M${X(x)} 0v3" stroke="#74869c"/><text x="${X(x)}" y="15" text-anchor="middle">${t}</text>`;
 document.getElementById('years').innerHTML=s;
}
draw();addEventListener('resize',draw);
</script>
<script src="https://cdn.jsdelivr.net/npm/bootstrap@5.3.0/dist/js/bootstrap.bundle.min.js"></script>
</body>
</html>
